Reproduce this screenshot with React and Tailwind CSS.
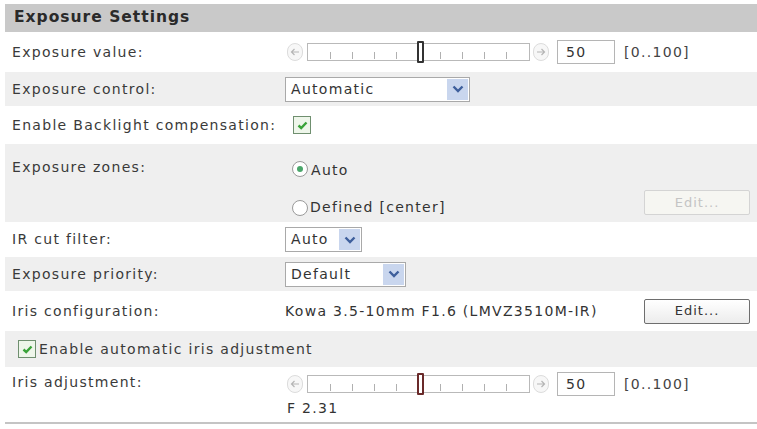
import React from "react";

const font = { fontFamily: '"DejaVu Sans", Verdana, sans-serif' };

const Row = ({ label, gray, className = "", children, top = false }) => (
  <div
    className={`flex ${top ? "items-start" : "items-center"} ${
      gray ? "bg-[#efefef]" : "bg-white"
    } ${className}`}
  >
    <div className="w-[280px] shrink-0 pl-[7px] text-[14px] tracking-[1.3px] text-[#3a3a3a]">
      {label}
    </div>
    <div className="flex-1 pr-[7px]">{children}</div>
  </div>
);

const Chevron = () => (
  <svg width="12" height="8" viewBox="0 0 12 8">
    <path d="M1.5 1.5 L6 6 L10.5 1.5" fill="none" stroke="#3e5f9c" strokeWidth="2.4" />
  </svg>
);

const Select = ({ value, width }) => (
  <div className={`flex h-[25px] items-stretch border border-[#a9a9a9] bg-white ${width}`}>
    <span className="flex-1 pl-[5px] text-[14px] leading-[23px] tracking-[1.3px] text-[#333]">
      {value}
    </span>
    <span className="my-[1px] mr-[1px] flex w-[21px] items-center justify-center bg-[#c9d6ee]">
      <Chevron />
    </span>
  </div>
);

const Check = ({ className = "" }) => (
  <span
    className={`flex h-[18px] w-[18px] shrink-0 items-center justify-center border border-[#6f8f6f] bg-[#eef6ea] ${className}`}
  >
    <svg width="11" height="9" viewBox="0 0 11 9">
      <path d="M1.5 4.5 L4.2 7 L9.5 1.5" fill="none" stroke="#3aa33a" strokeWidth="2.4" />
    </svg>
  </span>
);

const Radio = ({ on }) => (
  <span className="flex h-[16px] w-[16px] shrink-0 items-center justify-center rounded-full border border-[#9a9a9a] bg-white">
    {on && <span className="h-[6px] w-[6px] rounded-full bg-[#4aa66a]" />}
  </span>
);

const Arrow = ({ dir }) => (
  <span className="flex h-[18px] w-[16px] items-center justify-center rounded-full border border-[#dcdcdc] bg-[#f7f7f7]">
    <svg width="10" height="8" viewBox="0 0 10 8">
      {dir === "left" ? (
        <path d="M9 4 H1.5 M4.5 1 L1.5 4 L4.5 7" fill="none" stroke="#b5b5b5" strokeWidth="1.2" />
      ) : (
        <path d="M1 4 H8.5 M5.5 1 L8.5 4 L5.5 7" fill="none" stroke="#b5b5b5" strokeWidth="1.2" />
      )}
    </svg>
  </span>
);

const ticks = [0, 1, 2, 3, 4, 5, 6, 7, 8];

const Slider = ({ thumb }) => (
  <div className="flex items-center">
    <Arrow dir="left" />
    <div className="relative ml-[4px] h-[18px] w-[223px] border border-[#b9b9b9] bg-white">
      <div className="absolute bottom-[1px] left-[22px] right-[22px] flex justify-between">
        {ticks.map((t) =>
          t === 4 ? (
            <span key={t} className="w-[1px]" />
          ) : (
            <span key={t} className="h-[7px] w-[1px] bg-[#b0b0b0]" />
          )
        )}
      </div>
      <span
        className={`absolute left-[109px] top-[-3px] h-[22px] w-[7px] rounded-[1px] border-2 ${thumb} bg-white`}
      />
    </div>
    <span className="ml-[3px]">
      <Arrow dir="right" />
    </span>
    <span className="ml-[8px] h-[24px] w-[58px] border border-[#b5b5b5] bg-white pl-[8px] text-[14px] leading-[22px] tracking-[1.3px] text-[#333]">
      50
    </span>
    <span className="ml-[9px] text-[14px] tracking-[1.3px] text-[#444]">[0..100]</span>
  </div>
);

const Button = ({ disabled, children }) => (
  <span
    className={`flex h-[25px] w-[106px] items-center justify-center rounded-[2px] border text-[13px] tracking-[1px] ${
      disabled
        ? "border-[#d4d4d4] bg-[#f6f6f2] text-[#c4c4c4]"
        : "border-[#6e6e6e] bg-gradient-to-b from-white to-[#ececec] text-[#333]"
    }`}
  >
    {children}
  </span>
);

export default function App() {
  return (
    <div className="h-[429px] w-[757px] bg-white pt-[4px]" style={font}>
      <div className="ml-[5px]">
        <div className="flex h-[28px] items-center bg-[#c9c9c9] pl-[9px] text-[15.5px] font-bold tracking-[1px] text-[#2a2a2a]">
          Exposure Settings
        </div>

        <Row label="Exposure value:" className="h-[40px]">
          <div className="pl-[2px]">
            <Slider thumb="border-[#333]" />
          </div>
        </Row>

        <Row label="Exposure control:" gray className="h-[34px]">
          <Select value="Automatic" width="w-[185px]" />
        </Row>

        <Row label="Enable Backlight compensation:" className="h-[38px]">
          <Check className="ml-[8px]" />
        </Row>

        <Row label="Exposure zones:" gray top className="h-[78px] pt-[13px]">
          <div className="flex flex-col pl-[7px]">
            <label className="flex items-center gap-[3px] text-[14px] tracking-[1.3px] text-[#333]">
              <Radio on />
              <span className="mt-[3px]">Auto</span>
            </label>
            <div className="mt-[9px] flex items-start justify-between">
              <label className="mt-[7px] flex items-center gap-[2px] text-[14px] tracking-[1.3px] text-[#333]">
                <Radio />
                <span>Defined [center]</span>
              </label>
              <Button disabled>Edit...</Button>
            </div>
          </div>
        </Row>

        <Row label="IR cut filter:" className="h-[35px]">
          <Select value="Auto" width="w-[77px]" />
        </Row>

        <Row label="Exposure priority:" gray className="h-[34px]">
          <Select value="Default" width="w-[121px]" />
        </Row>

        <Row label="Iris configuration:" className="h-[40px]">
          <div className="flex items-center justify-between">
            <span className="text-[14px] tracking-[1.3px] text-[#333]">
              Kowa 3.5-10mm F1.6 (LMVZ3510M-IR)
            </span>
            <Button>Edit...</Button>
          </div>
        </Row>

        <div className="flex h-[36px] items-center gap-[3px] bg-[#efefef] pl-[13px] text-[14px] tracking-[1.3px] text-[#3a3a3a]">
          <Check />
          <span>Enable automatic iris adjustment</span>
        </div>

        <Row label="Iris adjustment:" top className="h-[55px] pt-[5px]">
          <div className="pl-[2px]">
            <Slider thumb="border-[#6a2a2a]" />
            <div className="mt-[2px] text-[14px] tracking-[1.3px] text-[#333]">F 2.31</div>
          </div>
        </Row>

        <div className="h-[2px] bg-[#c4c4c4]" />
      </div>
    </div>
  );
}
